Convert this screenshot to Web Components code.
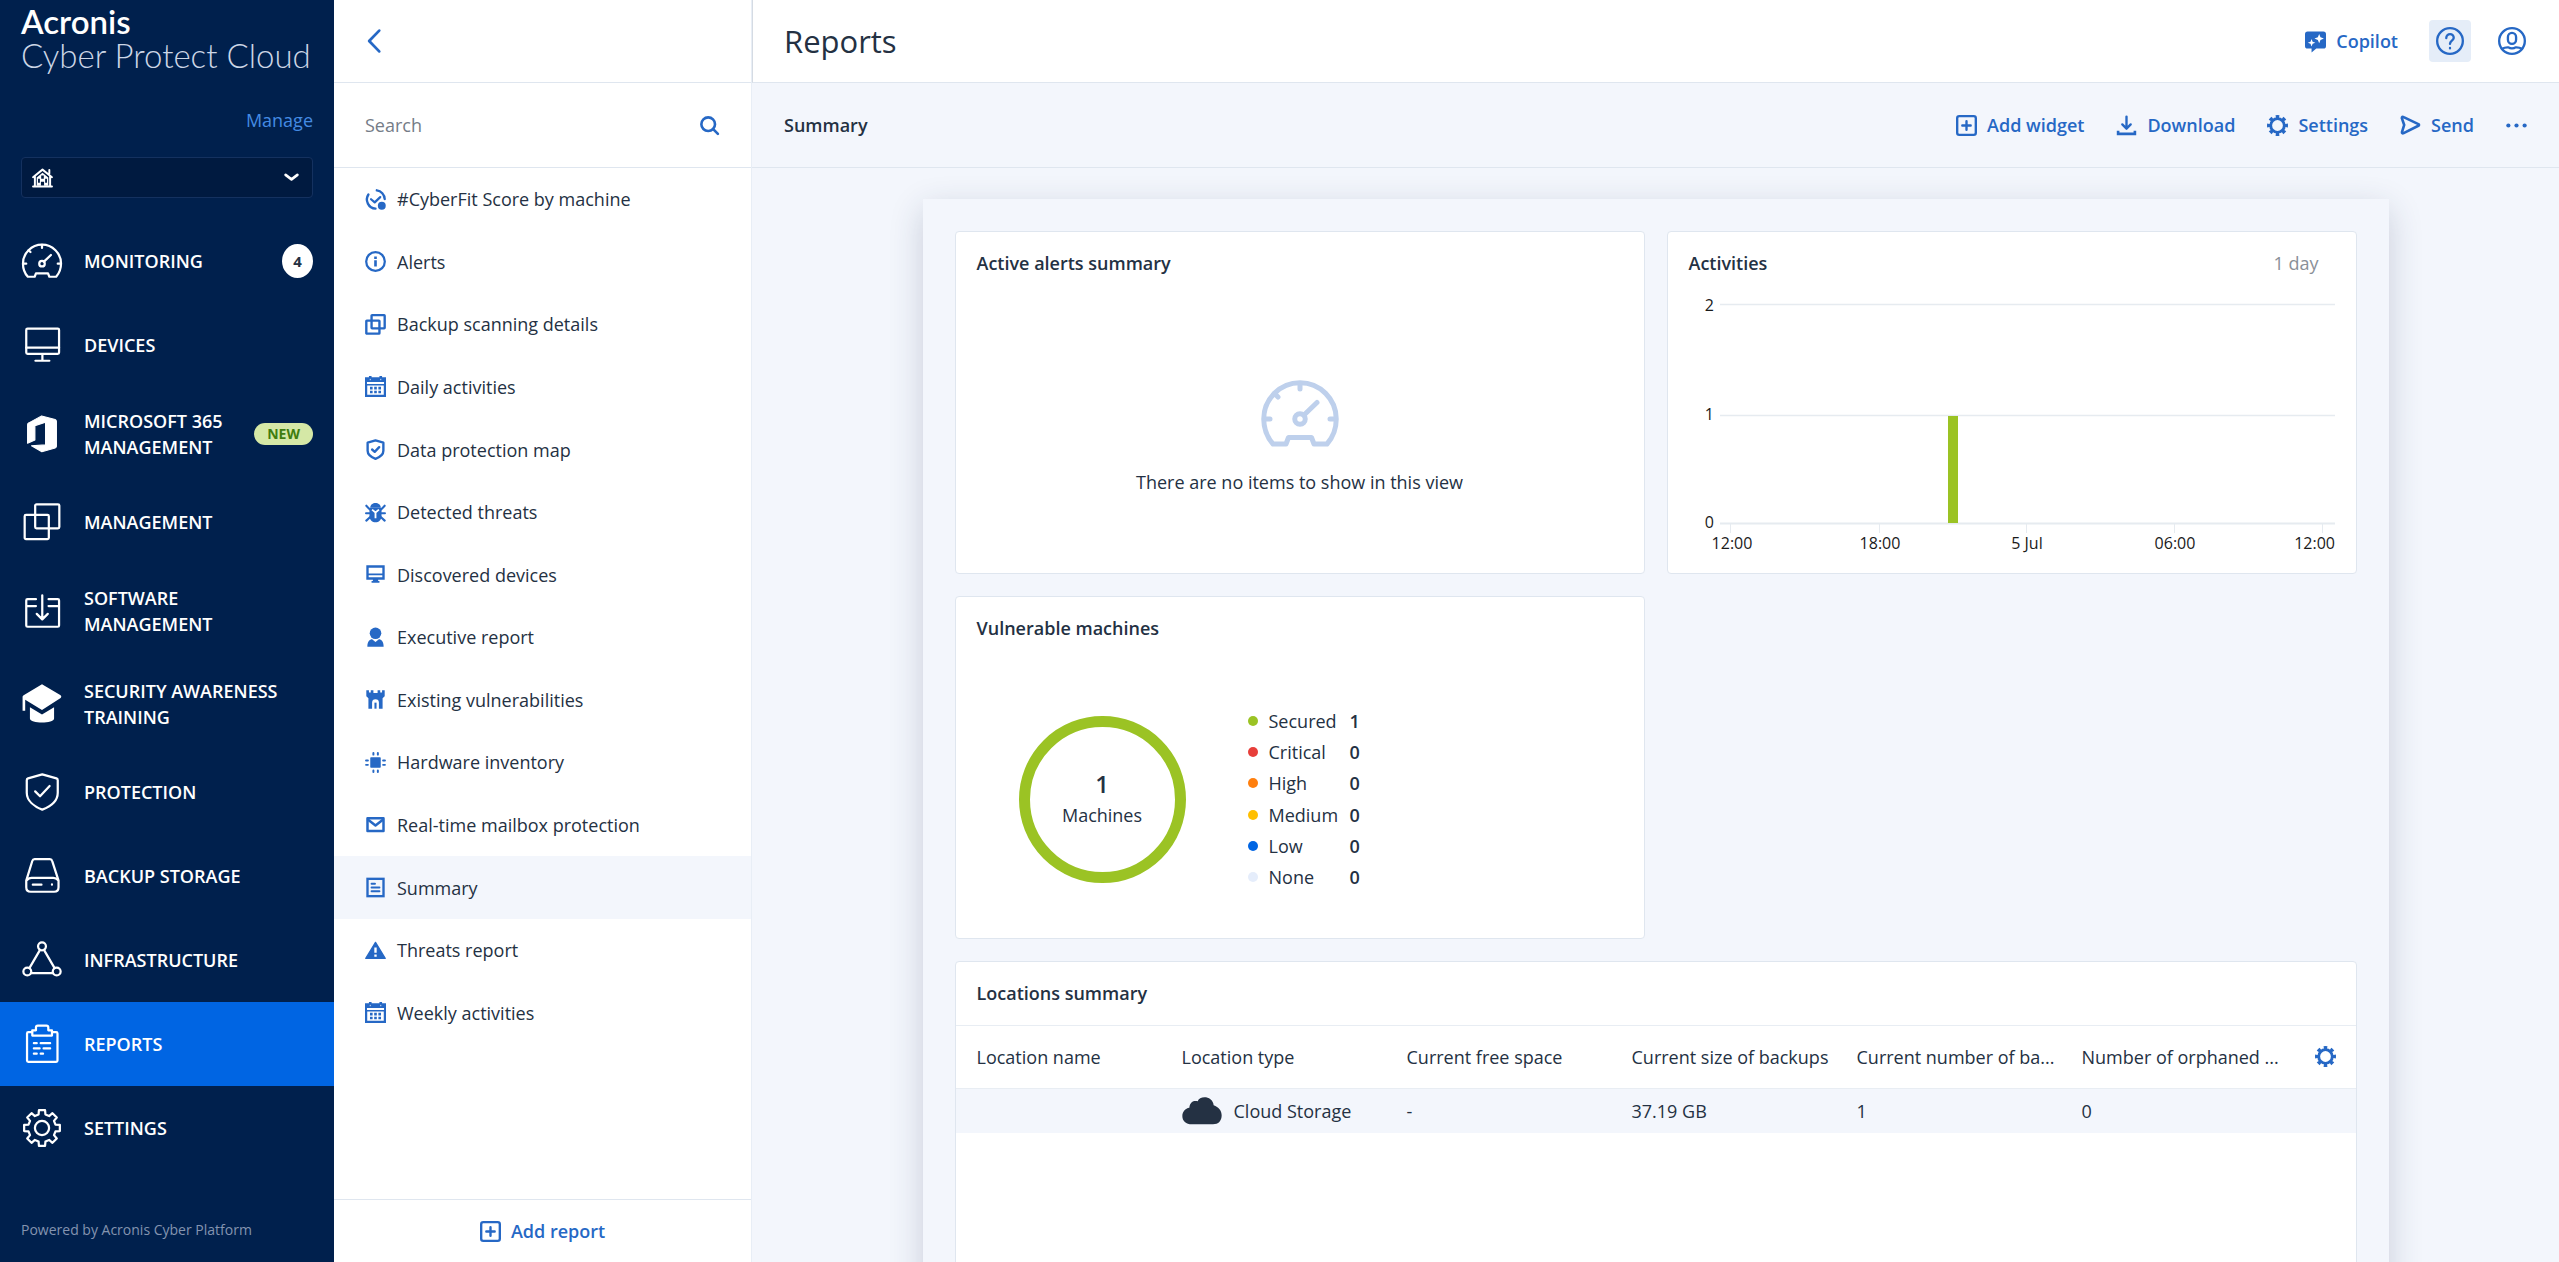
<!DOCTYPE html>
<html lang="en">
<head>
<meta charset="utf-8">
<meta name="viewport" content="width=device-width, initial-scale=1">
<title>Reports</title>
<style>
  :root {
    --navy: #00204d;
    --blue: #2668c5;
    --ink: #243143;
    --canvas: #f3f6fc;
    --line: #dfe6ef;
  }
  html, body { margin: 0; height: 100%; }
  body { font: 18px/26px "Open Sans", "Noto Sans", sans-serif; color: var(--ink); background: #fff; }
</style>
</head>
<body>
<app-shell>
  <side-nav slot="nav"></side-nav>
  <report-panel slot="panel"></report-panel>
  <page-header slot="header">Reports</page-header>
  <tool-bar slot="toolbar">Summary</tool-bar>
  <widget-card heading="Active alerts summary">
    <empty-state>There are no items to show in this view</empty-state>
  </widget-card>
  <widget-card heading="Activities" note="1 day"><activity-chart></activity-chart></widget-card>
  <widget-card heading="Vulnerable machines"><machine-donut></machine-donut></widget-card>
  <widget-card heading="Locations summary" wide><locations-table></locations-table></widget-card>
</app-shell>

<script>
const S = 'fill="none" stroke="currentColor" stroke-linejoin="round" stroke-linecap="round"';

/* Outline of a cog with eight teeth */
function cogPath(c, outer, inner) {
  const pts = [];
  for (let i = 0; i < 8; i++) {
    const a = i * Math.PI / 4 - Math.PI / 2;
    for (const [r, d] of [[inner, -.25], [outer, -.17], [outer, .17], [inner, .25]])
      pts.push((c + r * Math.cos(a + d)).toFixed(2) + ' ' + (c + r * Math.sin(a + d)).toFixed(2));
  }
  return 'M' + pts.join('L') + 'Z';
}
const calendar = `<path fill="currentColor" fill-rule="evenodd" d="M0 1H3V0H5V1H11V0H13V1H16V16H0ZM1.5 4.6V6H14.5V4.6ZM1.7 7.2V14.3H14.3V7.2ZM3.8 8.2H5.8V10.2H3.8ZM7 8.2H9V10.2H7ZM10.2 8.2H12.2V10.2H10.2ZM3.8 11.2H5.8V13.2H3.8ZM7 11.2H9V13.2H7ZM10.2 11.2H12.2V13.2H10.2Z"/><path d="M4 2.2V3.2M12 2.2V3.2" stroke="#fff" stroke-width=".6"/>`;
const gauge = width => `<g ${S} stroke-width="${width}"><path d="M5.2 28C3 25.5 1.5 22 1.5 18A14.5 14.5 0 0 1 30.5 18C30.5 22 29 25.5 26.8 28H21.6L20.6 25.4H11.4L10.4 28Z"/><path d="M16 3.8V6M1.8 18H4M28 18H30.2M5.8 7.8L7.2 9.2M17.5 16.5L22.8 11.4"/><circle cx="16" cy="18" r="2.1"/></g>`;

/* name: [viewBox side, markup] */
const ICONS = {
  gauge: [32, gauge(1.7)],
  gaugeBold: [32, gauge(2)],
  monitor: [32, `<g ${S} stroke-width="1.7"><rect x="4" y="3.6" width="25" height="19.2" rx="1"/><path d="M4 18H29M16.3 23V27.5M11 28H21.6"/></g>`],
  office: [32, `<path fill="currentColor" stroke="currentColor" stroke-width=".8" stroke-linejoin="round" d="M5 9Q5 8 6 7.5L15.7 2.2L26 5Q27 5.4 27 6.4V25.4Q27 26.3 26 26.7L15.9 29.5L8 25L18.7 24.3V7L10.6 9.7V20.6L5 23Z"/>`],
  squares: [32, `<g ${S} stroke-width="1.7"><rect x="10.8" y="2.5" width="18.4" height="18.4" rx="1"/><rect x="2.8" y="10.6" width="18.4" height="18.4" rx="1"/></g>`],
  software: [32, `<g ${S} stroke-width="1.7"><path d="M11.4 7H5Q4 7 4 8V27Q4 28 5 28H28Q29 28 29 27V8Q29 7 28 7H21M4 12.2H11.4M21 12.2H29M16.2 4V22M12 18.2L16.2 22.4L20.4 18.2"/></g>`],
  hat: [32, `<path fill="currentColor" d="M16 1L30.2 9.3Q31.3 10.3 30.2 11.5L16 20.6L3.2 12.8V21.2H1.2V10.4Q1.2 9.7 2 9.3Z"/><path fill="currentColor" d="M6.8 18.4L16 24L25.2 18.4V27C25.2 31 6.8 31 6.8 27Z"/>`],
  shield: [32, `<g ${S} stroke-width="1.7"><path d="M16.2 2.6L27 5.6Q28 6 28 7V16.5C28 22.5 22.5 27 16.2 29.4C10 27 4.4 22.5 4.4 16.5V7Q4.4 6 5.4 5.6Z"/><path d="M10.8 15.5L14.5 19.2L21.8 11.4"/></g>`],
  storage: [32, `<g ${S} stroke-width="1.7"><path d="M4 19.5L8.6 4.6Q9 3.2 10.4 3.2H22Q23.4 3.2 23.8 4.6L28.6 19.5V24.6Q28.6 28 25.2 28H7.4Q4 28 4 24.6Z"/><path d="M4.6 19Q6 17.4 8 17.4H24.6Q27 17.4 28 19M9 22.6H15.6M23.6 22.4V22.6"/></g>`],
  nodes: [32, `<g ${S} stroke-width="1.7"><circle cx="16" cy="5.6" r="3"/><circle cx="4.8" cy="24.8" r="3"/><circle cx="27.2" cy="24.8" r="3"/><path d="M14.5 8.3L6.4 22.2M17.5 8.3L25.6 22.2M7.8 26H24.2"/></g>`],
  clipboard: [32, `<g ${S} stroke-width="1.7"><path d="M8.4 7H5.6Q4.6 7 4.6 8V28.6Q4.6 29.6 5.6 29.6H26.8Q27.8 29.6 27.8 28.6V8Q27.8 7 26.8 7H24"/><path d="M8.6 9.6V5.6H11.4V3.4Q11.4 2 12.8 2H19.4Q20.8 2 20.8 3.4V5.6H23.6V9.6Z"/><path d="M9.8 15.4H12M15 15.4H22.2M9.8 19.4H14.2M17.2 19.4H22.2M9.8 23.4H12M15 23.4H16.8"/></g>`],
  cog: [32, `<g ${S} stroke-width="1.7"><path d="${cogPath(16, 13.8, 10.6)}"/><circle cx="16" cy="16" r="5.4"/></g>`],

  house: [16, `<path ${S} stroke-width="1.5" d="M.8 7.8L8 2L15.2 7.8M13.2 5V2.2"/><path ${S} stroke-width="1.5" d="M2.2 7.4V14.2M13.8 7.4V14.2M.8 14.8H15.2"/><path fill="currentColor" fill-rule="evenodd" d="M8 4.4L12.4 8V14.2H9.2V11.2H6.8V14.2H3.6V8ZM7 6.4V9H9V6.4ZM4.6 9V12H6V9ZM10 9V12H11.4V9Z"/>`],
  chevron: [16, `<path ${S} stroke-width="2" d="M3.5 6L8 9.4L12.5 6"/>`],
  back: [16, `<path ${S} stroke-width="1.7" d="M10.6 1.6L4.4 8L10.6 14.4"/>`],
  search: [16, `<g ${S} stroke-width="2"><circle cx="7" cy="7" r="5.2"/><path d="M11 11L14.4 14.4"/></g>`],
  score: [16, `<g ${S} stroke-width="1.8"><path d="M2.6 4.2A7 7 0 0 0 8 15"/><path d="M9 1A7 7 0 0 1 15 7.6"/><path d="M4.6 7.8L7.4 10.2L11.6 6.2" stroke-width="1.7"/></g><circle cx="12.8" cy="12.8" r="3" fill="currentColor"/>`],
  info: [16, `<circle cx="8" cy="8" r="7.1" ${S} stroke-width="1.7"/><path fill="currentColor" d="M7 7H9V11.8H7ZM7 4.2H9V6H7Z"/>`],
  copies: [16, `<g fill="none" stroke="currentColor" stroke-width="1.8"><rect x="5" y=".9" width="10" height="10" rx=".4"/><rect x="1" y="5" width="10" height="10" rx=".4"/></g>`],
  calendar: [16, calendar],
  guard: [16, `<g ${S} stroke-width="1.8"><path d="M8 1L14 2.8V9C14 12 11 14 8 15.1C5 14 2 12 2 9V2.8Z"/><path d="M5.4 8L7.4 9.8L10.8 6.2"/></g>`],
  bug: [16, `<path fill="currentColor" d="M4 4.4C4 -.4 12 -.4 12 4.4Z"/><path fill="currentColor" d="M3.4 4.4H12.6V10.6C12.6 17 3.4 17 3.4 10.6Z"/><g ${S} stroke-width="1.6"><path d="M3.6 5.6L1 2.8M12.4 5.6L15 2.8M3.4 8.6H.8M12.6 8.6H15.2M4 11.4L1 14.2M12 11.4L15 14.2"/></g><path d="M5.4 5.8L8 8L10.6 5.8M8 8V12.4" fill="none" stroke="#fff" stroke-width="1.4"/>`],
  desktop: [16, `<path fill="currentColor" fill-rule="evenodd" d="M1 1H15V12H10V13H11V14.2H5V13H6V12H1ZM2.8 2.8V7.2H13.2V2.8ZM2.8 8.6V10H13.2V8.6Z"/>`],
  person: [16, `<circle cx="8" cy="4.8" r="4.4" fill="currentColor"/><path fill="currentColor" d="M1.8 15C1.8 11 3.6 9.4 5.4 9.4L8 11.4L10.6 9.4C12.4 9.4 14.2 11 14.2 15Z"/>`],
  castle: [16, `<path fill="currentColor" d="M1 1H3V2.6H4.4V1H6.4V3H9.6V1H11.6V2.6H13V1H15V5.6L13.4 7V15H10.6V10.4A2.6 2.6 0 0 0 5.4 10.4V15H2.6V7L1 5.6Z"/><path fill="currentColor" d="M7.2 10.4H8.8V15H7.2Z"/>`],
  chip: [16, `<rect x="4" y="4" width="8" height="8" rx=".6" fill="currentColor"/><g ${S} stroke-width="1.5"><path d="M6.4 .8V2M9.8 .8V2M6.4 14V15.2M9.8 14V15.2M.8 6.4H2.2M.8 9.8H2.2M13.8 6.4H15.2M13.8 9.8H15.2"/></g>`],
  mail: [16, `<g ${S} stroke-width="1.9"><rect x="1.9" y="3.2" width="12.2" height="9.8"/><path d="M2.4 4.4L8 8.8L13.6 4.4"/></g>`],
  doc: [16, `<rect x="1.9" y="1.4" width="12.2" height="13.2" fill="none" stroke="currentColor" stroke-width="1.8"/><path ${S} stroke-width="1.5" d="M5 5.2H7.6M5 8H11M5 10.8H11"/>`],
  warning: [16, `<path fill="currentColor" stroke="currentColor" stroke-linejoin="round" d="M8 1.8L15.4 14H.6Z"/><path d="M8 5.8V9.8M8 11V12.8" stroke="#fff" stroke-width="1.8"/>`],
  plus: [16, `<g ${S} stroke-width="1.8"><rect x=".9" y=".9" width="14.2" height="14.2" rx="1.6"/><path d="M8 4.8V11.2M4.8 8H11.2"/></g>`],
  download: [16, `<g ${S} stroke-width="1.8"><path d="M8 1.2V10M4.8 7.2L8 10.4L11.2 7.2"/><path d="M1.6 12V14.4H14.4V12" stroke-linejoin="miter" stroke-linecap="butt" stroke-width="2"/></g>`],
  gear: [16, `<circle cx="8" cy="8" r="5.2" fill="none" stroke="currentColor" stroke-width="2.2"/><circle cx="8" cy="8" r="6.7" fill="none" stroke="currentColor" stroke-width="2.6" pathLength="16" stroke-dasharray="1 1" stroke-dashoffset=".5"/>`],
  send: [16, `<path ${S} stroke-width="2" d="M1.4 2.4Q1.4 .8 2.8 1.6L14 7Q15 7.6 14 8.2L2.8 13.8Q1.4 14.4 1.5 13L3.2 7.6Z"/>`],
  dots: [16, `<g fill="currentColor"><circle cx="1.8" cy="8" r="1.6"/><circle cx="8" cy="8" r="1.6"/><circle cx="14.2" cy="8" r="1.6"/></g>`],
  copilot: [16, `<path fill="currentColor" d="M2 .4H14Q16 .4 16 2.4V11.4Q16 13.4 14 13.4H8.6L5 16.4V13.4H2Q0 13.4 0 11.4V2.4Q0 .4 2 .4Z"/><path fill="#fff" d="M10.8 2.2L11.8 4.8L14.4 5.8L11.8 6.8L10.8 9.4L9.8 6.8L7.2 5.8L9.8 4.8ZM5 6L5.8 8.1L7.9 8.9L5.8 9.7L5 11.8L4.2 9.7L2.1 8.9L4.2 8.1Z"/>`],
  help: [24, `<g ${S} stroke-width="2"><circle cx="12" cy="12" r="11"/><path d="M8.8 9.4C8.8 5 15.4 5.2 15.2 9.4C15 11.8 12 11.8 12 14.4M12 18V18.2"/></g>`],
  user: [24, `<g ${S} stroke-width="2"><circle cx="12" cy="12" r="11"/><rect x="8.5" y="5" width="7" height="9.4" rx="3.5"/><path d="M3.4 18.6C6 17.2 7 17.4 9 17.4C10.4 18.6 13.6 18.6 15 17.4C17 17.4 18 17.2 20.6 18.6"/></g>`],
  cloud: [24, `<path fill="currentColor" d="M6 20C2.4 20 .2 18 .2 15C.2 12.4 2 10.4 4.4 10C4.8 6.4 7.2 5.6 9.4 6.2C10.6 2.6 18.4 2.8 19 8.6C22 9.6 23.8 12 23.8 14.6C23.8 18 21.8 20 18.6 20Z"/>`]
};

function define(name, template) {
  const t = document.createElement('template');
  customElements.define(name, class extends HTMLElement {
    connectedCallback() {
      if (this.shadowRoot) return;
      t.innerHTML = `<style>:host,*{box-sizing:border-box}button,input,select{font:inherit;color:inherit;background:none;border:0;padding:0;margin:0}button{cursor:pointer}a{color:inherit;text-decoration:none}ul{list-style:none;margin:0;padding:0}h1,h2,p{margin:0;font:inherit}</style>`
        + (typeof template === 'function' ? template(this) : template);
      this.attachShadow({ mode: 'open' }).append(t.content.cloneNode(true));
    }
  });
}

define('ui-icon', el => {
  const [side, body] = ICONS[el.getAttribute('name')];
  return `<style>:host{display:block;flex:none;width:var(--size,21px);height:var(--size,21px)}svg{display:block;width:100%;height:100%;overflow:visible}</style>
  <svg viewBox="0 0 ${side} ${side}" aria-hidden="true">${body}</svg>`;
});

define('brand-logo', `
  <style>
    :host{display:block;color:#fff;font-family:Lato,Inter,sans-serif;font-size:33px;line-height:34px;white-space:nowrap}
    b{display:block;font-weight:600}
    span{display:block;font-weight:300;color:#ccd6e6}
  </style>
  <b>Acronis</b><span>Cyber Protect Cloud</span>`);

define('tenant-select', `
  <style>
    :host{display:grid;grid-template-columns:1fr;align-items:center;color:#fff}
    select{grid-area:1/1;appearance:none;width:100%;height:41px;border:1px solid #14315f;border-radius:4px;background:#001a40}
    ui-icon{grid-area:1/1;pointer-events:none;margin:0 11px}
    .end{justify-self:end}
  </style>
  <select aria-label="Tenant"><option></option></select>
  <ui-icon name="house"></ui-icon><ui-icon class="end" name="chevron"></ui-icon>`);

define('nav-item', el => `
  <style>
    :host{display:block;color:#fff;font-weight:600}
    a{display:flex;align-items:center;gap:21px;height:${el.hasAttribute('tall') ? 93 : 84}px;padding:0 21px}
    a[aria-current]{background:#0065e3}
    ui-icon{--size:42px}
    .label{flex:1}
    .count{width:31px;height:34px;border-radius:50%;background:#fff;color:#243143;font-size:15px;line-height:34px;font-weight:700;text-align:center}
    .new{height:22px;padding:0 13px;border-radius:11px;background:#d5e8a6;color:#3f7d0f;font-size:14px;line-height:22px;font-weight:700}
  </style>
  <a href="#"${el.hasAttribute('current') ? ' aria-current="page"' : ''}>
    <ui-icon name="${el.getAttribute('icon')}"></ui-icon>
    <span class="label"><slot></slot></span>
    ${el.hasAttribute('count') ? `<span class="count">${el.getAttribute('count')}</span>` : ''}
    ${el.hasAttribute('fresh') ? '<span class="new">NEW</span>' : ''}
  </a>`);

define('side-nav', `
  <style>
    :host{display:flex;flex-direction:column;background:var(--navy);height:100%;overflow:hidden}
    header{padding:4px 21px 0}
    .manage{display:block;margin:35px 0 24px;text-align:right;color:#448be3}
    nav{margin-top:21px;flex:1}
    p{padding:0 21px 20px;font-size:14px;line-height:24px;color:#8494b0}
  </style>
  <header>
    <brand-logo></brand-logo>
    <a class="manage" href="#">Manage</a>
    <tenant-select></tenant-select>
  </header>
  <nav>
    <nav-item icon="gauge" count="4">MONITORING</nav-item>
    <nav-item icon="monitor">DEVICES</nav-item>
    <nav-item icon="office" tall fresh>MICROSOFT 365<br>MANAGEMENT</nav-item>
    <nav-item icon="squares">MANAGEMENT</nav-item>
    <nav-item icon="software" tall>SOFTWARE<br>MANAGEMENT</nav-item>
    <nav-item icon="hat" tall>SECURITY AWARENESS<br>TRAINING</nav-item>
    <nav-item icon="shield">PROTECTION</nav-item>
    <nav-item icon="storage">BACKUP STORAGE</nav-item>
    <nav-item icon="nodes">INFRASTRUCTURE</nav-item>
    <nav-item icon="clipboard" current>REPORTS</nav-item>
    <nav-item icon="cog">SETTINGS</nav-item>
  </nav>
  <p>Powered by Acronis Cyber Platform</p>`);

define('action-button', el => `
  <style>
    :host{display:block;color:var(--blue);font-weight:600}
    button{display:flex;align-items:center;gap:10px;height:42px;white-space:nowrap}
  </style>
  <button type="button"${el.hasAttribute('label') ? ` aria-label="${el.getAttribute('label')}"` : ''}><ui-icon name="${el.getAttribute('icon')}"></ui-icon><slot></slot></button>`);

const REPORTS = [
  ['score', '#CyberFit Score by machine'], ['info', 'Alerts'], ['copies', 'Backup scanning details'],
  ['calendar', 'Daily activities'], ['guard', 'Data protection map'], ['bug', 'Detected threats'],
  ['desktop', 'Discovered devices'], ['person', 'Executive report'], ['castle', 'Existing vulnerabilities'],
  ['chip', 'Hardware inventory'], ['mail', 'Real-time mailbox protection'], ['doc', 'Summary'],
  ['warning', 'Threats report'], ['calendar', 'Weekly activities']
];
define('report-panel', `
  <style>
    :host{display:flex;flex-direction:column;height:100%;background:#fff;border-right:1px solid #e8eef6}
    .top{display:flex;align-items:center;height:83px;padding:0 28px;border-bottom:1px solid var(--line);color:var(--blue)}
    .top ui-icon{--size:26px}
    .search{display:flex;align-items:center;height:85px;padding:0 31px;border-bottom:1px solid var(--line)}
    input{flex:1;min-width:0;outline:0}
    input::placeholder{color:#757c87;opacity:1}
    .search button{color:var(--blue)}
    ul{display:grid;grid-auto-rows:1fr;height:876px}
    a{display:flex;align-items:center;gap:11px;height:100%;padding:0 31px}
    a[aria-current]{background:var(--canvas)}
    a ui-icon{color:var(--blue)}
    footer{display:flex;justify-content:center;align-items:center;height:63px;margin-top:auto;border-top:1px solid var(--line)}
  </style>
  <div class="top"><button type="button" aria-label="Back"><ui-icon name="back"></ui-icon></button></div>
  <div class="search"><input type="text" placeholder="Search" aria-label="Search"><button type="button" aria-label="Find"><ui-icon name="search"></ui-icon></button></div>
  <ul>${REPORTS.map(([i, t]) => `<li><a href="#"${t === 'Summary' ? ' aria-current="page"' : ''}><ui-icon name="${i}"></ui-icon>${t}</a></li>`).join('')}</ul>
  <footer><action-button icon="plus">Add report</action-button></footer>`);

define('page-header', `
  <style>
    :host{display:flex;align-items:center;height:83px;padding:0 32px 0 31px;background:#fff;border-bottom:1px solid var(--line);border-left:1px solid #d5dbe3}
    h1{flex:1;font-size:31px;line-height:42px}
    .round{--size:28px;color:var(--blue);height:42px;padding:0 7px;border-radius:4px}
    .help{background:#e5edf8;margin:0 20px 0 31px}
    .user{margin-right:-6px}
  </style>
  <h1><slot></slot></h1>
  <action-button icon="copilot">Copilot</action-button>
  <button class="round help" type="button" aria-label="Help"><ui-icon name="help"></ui-icon></button>
  <button class="round user" type="button" aria-label="Account"><ui-icon name="user"></ui-icon></button>`);

define('tool-bar', `
  <style>
    :host{display:flex;align-items:center;gap:32px;height:85px;padding:0 32px;background:var(--canvas);border-bottom:1px solid var(--line)}
    h2{flex:1;font-weight:600}
  </style>
  <h2><slot></slot></h2>
  <action-button icon="plus">Add widget</action-button>
  <action-button icon="download">Download</action-button>
  <action-button icon="gear">Settings</action-button>
  <action-button icon="send">Send</action-button>
  <action-button icon="dots" label="More"></action-button>`);

define('widget-card', el => `
  <style>
    :host{display:flex;flex-direction:column;min-height:343px;background:#fff;border:1px solid var(--line);border-radius:4px;overflow:hidden}
    :host([wide]){grid-column:1/-1}
    header{display:flex;justify-content:space-between;height:63px;padding:0 37px 0 21px;line-height:63px}
    h2{font-weight:600}
    span{color:#8a9098}
  </style>
  <header><h2>${el.getAttribute('heading')}</h2>${el.hasAttribute('note') ? `<span>${el.getAttribute('note')}</span>` : ''}</header>
  <slot></slot>`);

define('empty-state', `
  <style>
    :host{flex:1;display:flex;flex-direction:column;align-items:center;justify-content:center;gap:15px}
    ui-icon{--size:80px;color:#bed0ec}
  </style>
  <ui-icon name="gaugeBold"></ui-icon><p><slot></slot></p>`);

define('activity-chart', `
  <style>
    :host{display:block}
    svg{display:block;width:100%}
    text{font-size:16px;fill:#1a1a1a}
  </style>
  <svg viewBox="0 0 688 278" role="img" aria-label="Activities over 1 day">
    <g stroke="#e6ebf0" stroke-width="1.5"><path d="M52 9.5H667M52 120.5H667"/><path d="M52 228.5H667" stroke-width="2"/>
    <path d="M62.5 229V238M211.5 229V238M358.5 229V238M506.5 229V238M654.5 229V238" stroke-width="1"/></g>
    <rect x="280" y="121" width="10" height="107" fill="#9bc324"/>
    <g text-anchor="end"><text x="46" y="16">2</text><text x="46" y="125">1</text><text x="46" y="233">0</text></g>
    <g text-anchor="middle"><text x="64" y="254">12:00</text><text x="212" y="254">18:00</text><text x="359" y="254">5 Jul</text><text x="507" y="254">06:00</text></g>
    <text x="667" y="254" text-anchor="end">12:00</text>
  </svg>`);

const LEVELS = [['Secured', 1, '#9bc324'], ['Critical', 0, '#e73e3a'], ['High', 0, '#ff7f0e'], ['Medium', 0, '#ffbf00'], ['Low', 0, '#0065e3'], ['None', 0, '#e5edfb']];
define('machine-donut', `
  <style>
    :host{flex:1;display:flex;align-items:center;gap:62px;padding:0 63px}
    .ring{display:flex;flex-direction:column;align-items:center;justify-content:center;gap:4px;width:167px;height:167px;border:11px solid #9bc324;border-radius:50%}
    strong{font-size:24px;line-height:28px;font-weight:600}
    ul{display:grid;grid-auto-rows:1fr;height:188px}
    li{display:grid;grid-template-columns:10px 70px 10px;gap:11px;align-items:center}
    i{width:10px;height:10px;border-radius:50%}
    b{font-weight:600}
  </style>
  <div class="ring"><strong>1</strong><span>Machines</span></div>
  <ul>${LEVELS.map(([n, v, c]) => `<li><i style="background:${c}"></i><span>${n}</span><b>${v}</b></li>`).join('')}</ul>`);

define('locations-table', `
  <style>
    :host{display:block;border-top:1px solid #e8edf3}
    table{width:100%;table-layout:fixed;border-collapse:collapse;text-align:left}
    th,td{padding:0 0 0 21px;font-weight:400;white-space:nowrap}
    th{height:62px;border-bottom:1px solid #e8edf3}
    td{height:45px;background:var(--canvas)}
    .first{width:205px}.col{width:225px}
    .type{display:flex;align-items:center;gap:12px}
    .type ui-icon{--size:40px}
    .set{padding-left:29px}
    button{display:block;color:var(--blue)}
  </style>
  <table>
    <colgroup><col class="first"><col class="col"><col class="col"><col class="col"><col class="col"><col class="col"><col></colgroup>
    <thead><tr><th>Location name</th><th>Location type</th><th>Current free space</th><th>Current size of backups</th><th>Current number of ba...</th><th>Number of orphaned ...</th><th class="set"><button type="button" aria-label="Columns"><ui-icon name="gear"></ui-icon></button></th></tr></thead>
    <tbody><tr><td></td><td><div class="type"><ui-icon name="cloud"></ui-icon>Cloud Storage</div></td><td>-</td><td>37.19 GB</td><td>1</td><td>0</td><td></td></tr></tbody>
  </table>`);

define('app-shell', `
  <style>
    :host{display:grid;grid-template-columns:334px 418px minmax(0,1fr);height:100vh;overflow:hidden}
    .side{min-height:0}
    main{display:flex;flex-direction:column;min-width:0;min-height:0;background:var(--canvas)}
    .scroll{flex:1;min-height:0;overflow-y:auto;scrollbar-width:none;padding:31px 32px 32px}
    .paper{display:grid;grid-template-columns:1fr 1fr;gap:22px;max-width:1466px;margin:0 auto;padding:32px;background:var(--canvas);box-shadow:0 10px 32px rgba(36,49,83,.2)}
  </style>
  <div class="side"><slot name="nav"></slot></div>
  <div class="side"><slot name="panel"></slot></div>
  <main>
    <slot name="header"></slot>
    <slot name="toolbar"></slot>
    <div class="scroll"><div class="paper"><slot></slot></div></div>
  </main>`);
</script>
</body>
</html>
